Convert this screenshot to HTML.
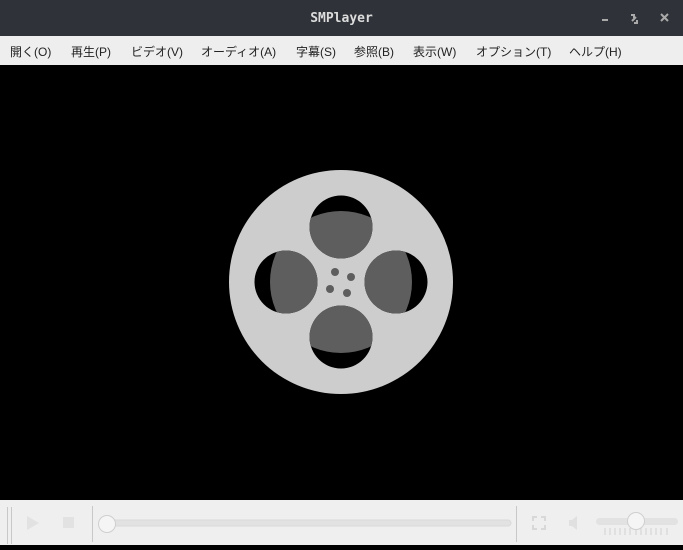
<!DOCTYPE html>
<html><head><meta charset="utf-8"><style>
html,body{margin:0;padding:0;width:683px;height:545px;overflow:hidden;background:#000;font-family:"Liberation Sans","Noto Sans CJK JP",sans-serif}
.t{position:absolute;left:0;top:0;width:683px;height:36px;background:#2f3238;}
.t .n{position:absolute;left:0;width:683px;top:11px;text-align:center;color:#dcdcdc;font:bold 13px "DejaVu Sans Mono","Liberation Mono",monospace}
.m{position:absolute;left:0;top:36px;width:683px;height:29px;background:#eeeeee;}
.m span{position:absolute;top:7px;font-size:12px;color:#222;white-space:nowrap}
.c{position:absolute;left:0;top:500px;width:683px;height:45px;background:#efefef;}
</style></head><body>
<div class="t"><div class="n">SMPlayer</div>
<svg width="683" height="36" style="position:absolute;left:0;top:0">
<rect x="602" y="19" width="6" height="2" fill="#aaa"/>
<path d="M631 15h3v3M637 20v3h-3" stroke="#aaa" stroke-width="2" fill="none"/>
<path d="M632 21l2 -2M636 17l-2 2" stroke="#aaa" stroke-width="2"/>
<path d="M661 14l7 7M668 14l-7 7" stroke="#aaa" stroke-width="2"/>
</svg></div>
<div class="m">
<span style="left:10px">開く(O)</span><span style="left:71px">再生(P)</span><span style="left:131px">ビデオ(V)</span><span style="left:201px">オーディオ(A)</span><span style="left:296px">字幕(S)</span><span style="left:354px">参照(B)</span><span style="left:413px">表示(W)</span><span style="left:476px">オプション(T)</span><span style="left:569px">ヘルプ(H)</span>
</div>
<svg width="683" height="435" style="position:absolute;left:0;top:65px">
<defs><clipPath id="h"><circle cx="341" cy="162" r="31.5"/><circle cx="341" cy="272" r="31.5"/><circle cx="286" cy="217" r="31.5"/><circle cx="396" cy="217" r="31.5"/></clipPath></defs>
<circle cx="341" cy="217" r="112" fill="#cdcdcd"/>
<g clip-path="url(#h)"><rect x="200" y="100" width="300" height="250" fill="#000"/><circle cx="341" cy="217" r="71" fill="#5e5e5e"/></g>
<circle cx="335" cy="207" r="4" fill="#5e5e5e"/><circle cx="351" cy="212" r="4" fill="#5e5e5e"/><circle cx="330" cy="224" r="4" fill="#5e5e5e"/><circle cx="347" cy="228" r="4" fill="#5e5e5e"/>
</svg>
<div class="c"><svg width="683" height="45">
<path d="M7.5 7v37M11.5 7v37M92.5 6v36M516.5 6v36" stroke="#c8c8c8" stroke-width="1"/>
<path d="M27 16l12 7-12 7z" fill="#e2e2e2"/>
<rect x="63" y="17" width="11" height="11" fill="#e2e2e2"/>
<rect x="100" y="20" width="411" height="6" rx="3" fill="#e2e2e2" stroke="#dadada"/>
<circle cx="107" cy="24" r="8.5" fill="#f5f5f5" stroke="#cfcfcf"/>
<path d="M533 21v-4h4M541 17h4v4M545 25v4h-4M537 29h-4v-4" stroke="#d8d8d8" stroke-width="2" fill="none"/>
<path d="M569 20h3l5-4v14l-5-4h-3z" fill="#e0e0e0"/>
<rect x="596" y="18" width="82" height="7" rx="3.5" fill="#e2e2e2"/>
<path d="M605 28v7M610 28v7M615 28v7M620 28v7M625 28v7M630 28v7M636 28v7M641 28v7M646 28v7M651 28v7M656 28v7M661 28v7M667 28v7" stroke="#d0d0d0"/>
<circle cx="636" cy="21" r="8.5" fill="#f5f5f5" stroke="#cfcfcf"/>
</svg></div>
</body></html>
